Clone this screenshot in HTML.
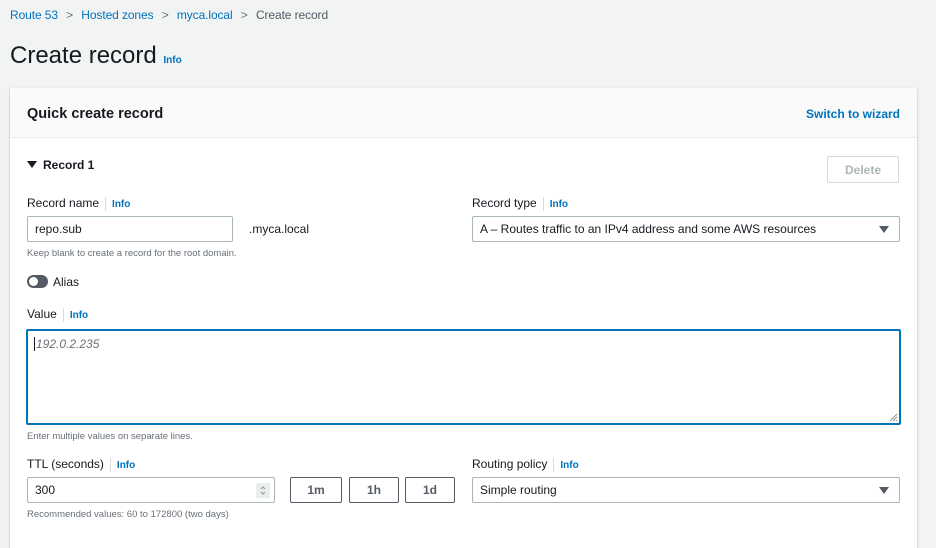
<!DOCTYPE html>
<html><head><meta charset="utf-8"><style>
*{box-sizing:border-box;margin:0;padding:0}
body{width:936px;height:538px;overflow:hidden;background:#f2f3f3;font-family:"Liberation Sans",Arial,sans-serif;color:#16191f;position:relative}
.a{position:absolute}
.lnk{color:#0073bb}
.info{color:#0073bb;font-weight:bold;font-size:10px}
.lbl{font-size:12px;color:#16191f}
.sep{display:inline-block;width:1px;height:14px;background:#d5dbdb;vertical-align:middle;margin:0 6px}
.in{border:1px solid #aab7b8;background:#fff;border-radius:2px;font-size:12px;padding-left:7px;display:flex;align-items:center}
.hint{font-size:9.5px;color:#687078}
.btn{border:1px solid #545b64;background:#fff;border-radius:2px;font-size:12px;font-weight:bold;color:#545b64;display:flex;align-items:center;justify-content:center}
.tri{position:absolute;right:10px;top:9px;width:0;height:0;border-left:5px solid transparent;border-right:5px solid transparent;border-top:7px solid #545b64}
</style></head><body>
<div class="a" style="left:10px;top:8px;font-size:12px;letter-spacing:-0.1px"><span class="lnk">Route 53</span> <span style="color:#687078;margin:0 5px">&gt;</span> <span class="lnk">Hosted zones</span> <span style="color:#687078;margin:0 5px">&gt;</span> <span class="lnk">myca.local</span> <span style="color:#687078;margin:0 5px">&gt;</span> <span style="color:#545b64">Create record</span></div>
<div class="a" style="left:10px;top:42px;font-size:24px;color:#16191f">Create record <span class="info" style="font-size:10px">Info</span></div>
<div class="a" style="left:10px;top:88px;width:907px;height:460px;background:#fff;box-shadow:0 1px 2px rgba(0,28,36,.3)">
<div style="height:50px;background:#fafafa;border-bottom:1px solid #eaeded;position:relative">
<div class="a" style="left:17px;top:18px;font-size:14.5px;font-weight:bold">Quick create record</div>
<div class="a lnk" style="right:17px;top:19px;font-size:12px;font-weight:bold">Switch to wizard</div>
</div></div>
<div class="a" style="left:27px;top:161px;width:0;height:0;border-left:5px solid transparent;border-right:5px solid transparent;border-top:7px solid #16191f"></div>
<div class="a" style="left:43px;top:158px;font-size:12px;font-weight:bold">Record 1</div>
<div class="a btn" style="left:827px;top:156px;width:72px;height:27px;border-color:#d5dbdb;color:#aab7b8">Delete</div>
<div class="a lbl" style="left:27px;top:196px">Record name<span class="sep"></span><span class="info">Info</span></div>
<div class="a in" style="left:27px;top:216px;width:206px;height:26px">repo.sub</div>
<div class="a" style="left:249px;top:222px;font-size:12px">.myca.local</div>
<div class="a hint" style="left:27px;top:248px">Keep blank to create a record for the root domain.</div>
<div class="a lbl" style="left:472px;top:196px">Record type<span class="sep"></span><span class="info">Info</span></div>
<div class="a in" style="left:472px;top:216px;width:428px;height:26px">A – Routes traffic to an IPv4 address and some AWS resources<div class="tri"></div></div>
<div class="a" style="left:27px;top:275px;width:21px;height:13px;border-radius:7px;background:#545b64"><div style="position:absolute;left:2px;top:2px;width:9px;height:9px;border-radius:50%;background:#fff"></div></div>
<div class="a" style="left:53px;top:275px;font-size:12px">Alias</div>
<div class="a lbl" style="left:27px;top:307px">Value<span class="sep"></span><span class="info">Info</span></div>
<div class="a" style="left:26px;top:329px;width:875px;height:96px;border:2px solid #0073bb;border-radius:2px;background:#fff"><div style="position:absolute;left:6px;top:6px;font-size:12px;font-style:italic;color:#687078;border-left:1px solid #16191f;padding-left:1px">192.0.2.235</div>
<svg style="position:absolute;right:1px;bottom:1px" width="10" height="10"><path d="M9 2L2 9M9 5L5 9M9 8L8 9" stroke="#879596" stroke-width="1"/></svg></div>
<div class="a hint" style="left:27px;top:431px">Enter multiple values on separate lines.</div>
<div class="a lbl" style="left:27px;top:457px">TTL (seconds)<span class="sep"></span><span class="info">Info</span></div>
<div class="a in" style="left:27px;top:477px;width:248px;height:26px">300<div style="position:absolute;right:4px;top:5px;width:14px;height:15px;background:#eaeded"><svg width="14" height="15"><path d="M5 6L7 4L9 6M5 9L7 11L9 9" stroke="#879596" fill="none" stroke-width="1"/></svg></div></div>
<div class="a btn" style="left:290px;top:477px;width:52px;height:26px">1m</div>
<div class="a btn" style="left:349px;top:477px;width:50px;height:26px">1h</div>
<div class="a btn" style="left:405px;top:477px;width:50px;height:26px">1d</div>
<div class="a hint" style="left:27px;top:509px">Recommended values: 60 to 172800 (two days)</div>
<div class="a lbl" style="left:472px;top:457px">Routing policy<span class="sep"></span><span class="info">Info</span></div>
<div class="a in" style="left:472px;top:477px;width:428px;height:26px">Simple routing<div class="tri"></div></div>
</body></html>
